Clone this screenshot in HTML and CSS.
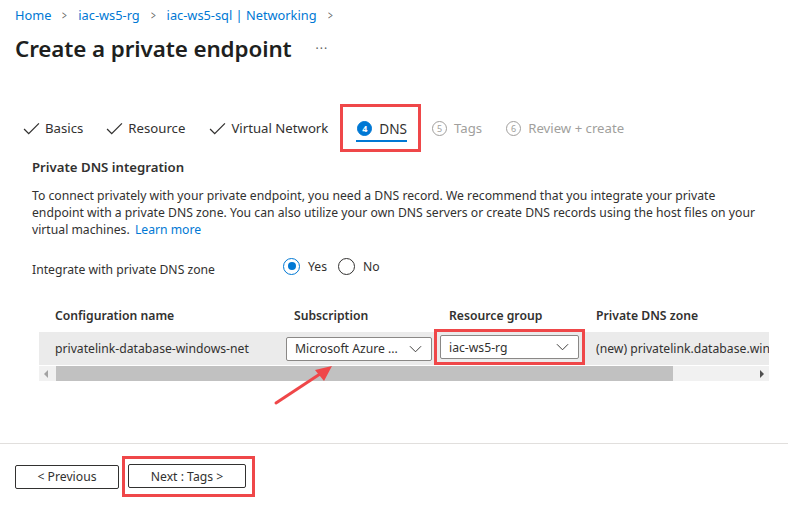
FILE: index.html
```html
<!DOCTYPE html>
<html>
<head>
<meta charset="utf-8">
<link rel="stylesheet" href="styles.css">
</head>
<body>
<div class="page">
  <nav class="crumbs">
    <a>Home</a><span class="sep">&gt;</span>
    <a>iac-ws5-rg</a><span class="sep">&gt;</span>
    <a>iac-ws5-sql | Networking</a><span class="sep">&gt;</span>
  </nav>
  <div class="titlerow">
    <h1>Create a private endpoint</h1>
    <span class="more">···</span>
  </div>

  <div class="tabs">
    <div class="tab done"><svg class="check" viewBox="0 0 18 14"><path d="M1 7.5 L6 12.5 L17 1.5" fill="none" stroke="#323130" stroke-width="1.4"/></svg>Basics</div>
    <div class="tab done"><svg class="check" viewBox="0 0 18 14"><path d="M1 7.5 L6 12.5 L17 1.5" fill="none" stroke="#323130" stroke-width="1.4"/></svg>Resource</div>
    <div class="tab done"><svg class="check" viewBox="0 0 18 14"><path d="M1 7.5 L6 12.5 L17 1.5" fill="none" stroke="#323130" stroke-width="1.4"/></svg>Virtual Network</div>
    <div class="tab active"><span class="num filled">4</span>DNS</div>
    <div class="tab todo"><span class="num">5</span>Tags</div>
    <div class="tab todo"><span class="num">6</span>Review + create</div>
  </div>

  <section class="content">
    <h2>Private DNS integration</h2>
    <p class="desc">To connect privately with your private endpoint, you need a DNS record. We recommend that you integrate your private endpoint with a private DNS zone. You can also utilize your own DNS servers or create DNS records using the host files on your virtual machines. <a class="link">Learn more</a></p>
    <div class="field">
      <span class="label">Integrate with private DNS zone</span>
      <div class="radios">
        <span class="radio on"></span><span class="rlabel">Yes</span>
        <span class="radio"></span><span class="rlabel">No</span>
      </div>
    </div>
  </section>

  <div class="table">
    <div class="thead">
      <div class="c1">Configuration name</div>
      <div class="c2">Subscription</div>
      <div class="c3">Resource group</div>
      <div class="c4">Private DNS zone</div>
    </div>
    <div class="trow">
      <div class="c1">privatelink-database-windows-net</div>
      <div class="c2"><div class="dd sub"><span>Microsoft Azure ...</span><svg class="chev" viewBox="0 0 14 8"><path d="M1 1 L7 7 L13 1" fill="none" stroke="#323130" stroke-width="1"/></svg></div></div>
      <div class="c3"><div class="hl"><div class="dd rg"><span>iac-ws5-rg</span><svg class="chev" viewBox="0 0 14 8"><path d="M1 1 L7 7 L13 1" fill="none" stroke="#323130" stroke-width="1"/></svg></div></div></div>
      <div class="c4 zone">(new) privatelink.database.windows.net</div>
    </div>
    <div class="scroll">
      <span class="arr left"></span>
      <span class="thumb"></span>
      <span class="arr right"></span>
    </div>
    <svg class="pointer" viewBox="0 0 70 50" width="70" height="50">
      <path d="M5 44 L52 13" stroke="#ef4749" stroke-width="3" stroke-linecap="round"/>
      <path d="M61 7 L44 11 L53 22 Z" fill="#ef4749"/>
    </svg>
  </div>

  <div class="footer">
    <button class="btn">&lt; Previous</button>
    <div class="hlbtn"><button class="btn next">Next : Tags &gt;</button></div>
  </div>
</div>
</body>
</html>
```
FILE: styles.css
```css
* { box-sizing: border-box; }
body {
  margin: 0;
  font-family: "Noto Sans", "Open Sans", sans-serif;
  color: #323130;
  background: #fff;
  width: 788px;
  height: 505px;
  overflow: hidden;
}
.page { position: relative; }
.crumbs {
  display: flex;
  align-items: center;
  padding: 6px 0 0 15px;
  height: 24px;
  font-size: 12.8px;
}
.crumbs a { color: #0078d4; }
.crumbs .sep { color: #605e5c; margin: 0 10px; font-size: 12px; transform: scaleX(0.7); }
.titlerow {
  display: flex;
  align-items: center;
  height: 48px;
  padding-left: 15px;
}
h1 {
  margin: 0;
  font-size: 22.4px;
  font-weight: 600;
  color: #201f1e;
  letter-spacing: -0.1px;
}
.more { margin-left: 24px; font-size: 12px; color: #605e5c; letter-spacing: 1px; }

.tabs {
  display: flex;
  margin-top: 32px;
  padding-left: 23px;
  height: 48px;
  align-items: center;
  font-size: 13.2px;
}
.tab { display: flex; align-items: center; margin-right: 24px; height: 100%; position: relative; }
.tab.done:first-child { margin-right: 23px; }
.check { width: 17px; height: 13px; margin-right: 5px; }
.tab.active {
  border: 3px solid #ef4749;
  padding: 0 11px 0 14px;
  margin-left: -12px;
  margin-right: 11px;
  font-size: 13.6px;
}
.tab.active::after {
  content: "";
  position: absolute;
  left: 13px; right: 11px;
  bottom: 7px;
  height: 2px;
  background: #0078d4;
}
.num {
  width: 15px; height: 15px;
  border-radius: 50%;
  border: 1px solid #a19f9d;
  font-size: 9px;
  display: inline-flex;
  align-items: center;
  justify-content: center;
  margin-right: 7px;
  color: #a19f9d;
}
.num.filled { background: #0078d4; border-color: #0078d4; color: #fff; font-weight: 700; }
.tab.todo { color: #a19f9d; margin-right: 24px; }

.content { padding-left: 32px; }
h2 { margin: 6px 0 0; font-size: 13.2px; font-weight: 600; height: 18px; line-height: 18px; }
.desc {
  margin: 11px 0 0;
  font-size: 12.2px;
  line-height: 17px;
  width: 733px;
}
.link { color: #0078d4; margin-left: 2px; }
.field { display: flex; align-items: center; margin-top: 18px; height: 20px; font-size: 12.2px; }
.label { width: 251px; padding-top: 6px; }
.radios { display: flex; align-items: center; }
.radio {
  width: 17px; height: 17px; border-radius: 50%;
  border: 1px solid #323130;
  display: inline-block;
  position: relative;
}
.radio.on { border-color: #0078d4; }
.radio.on::after {
  content: ""; position: absolute; left: 3.5px; top: 3.5px;
  width: 8px; height: 8px; border-radius: 50%; background: #0078d4;
}
.rlabel { margin: 0 11px 0 8px; }

.table { position: relative; margin: 22px 0 0 39px; width: 730px; font-size: 12.2px; }
.thead, .trow { display: grid; grid-template-columns: 247px 148px 162px 173px; align-items: center; }
.thead { height: 34px; font-weight: 600; color: #323130; }
.thead .c1 { padding-left: 16px; }
.thead .c2 { padding-left: 8px; }
.thead .c3 { padding-left: 15px; }
.trow { height: 33px; background: #ebebeb; }
.trow .c1 { padding-left: 16px; }
.zone { white-space: nowrap; overflow: hidden; }
.dd {
  height: 24px;
  background: #fff;
  border: 1px solid #8a8886;
  display: flex;
  align-items: center;
  justify-content: space-between;
  padding: 0 9px 0 8px;
  border-radius: 2px;
}
.dd.sub { width: 146px; }
.hl { width: 151px; height: 36px; border: 3px solid #ef4749; padding: 3px; margin-top: -3px; }
.dd.rg { width: 139px; }
.chev { width: 13px; height: 8px; }
.scroll {
  margin-top: 1px;
  height: 15px;
  background: #f1f1f1;
  display: flex;
  align-items: center;
  position: relative;
}
.thumb { position: absolute; left: 17px; width: 617px; top: 0; bottom: 0; background: #c1c1c1; }
.arr { position: absolute; width: 0; height: 0; border-top: 4px solid transparent; border-bottom: 4px solid transparent; }
.arr.left { left: 5px; border-right: 4px solid #a3a3a3; }
.arr.right { right: 5px; border-left: 4px solid #505050; }
.pointer { position: absolute; left: 232px; top: 61px; }

.footer {
  position: absolute;
  left: 0; top: 443px; width: 788px;
  border-top: 1px solid #e1dfdd;
  padding: 12px 0 0 15px;
  display: flex;
  align-items: center;
  gap: 3px;
}
.btn {
  font-family: inherit;
  font-size: 12.2px;
  color: #323130;
  background: #fff;
  border: 1px solid #323130;
  border-radius: 2px;
  height: 24px;
  padding: 0;
  width: 104px;
}
.hlbtn { border: 3px solid #ef4749; padding: 5px 6px 6px 3px; }
.btn.next { width: 118px; display: block; }
```
